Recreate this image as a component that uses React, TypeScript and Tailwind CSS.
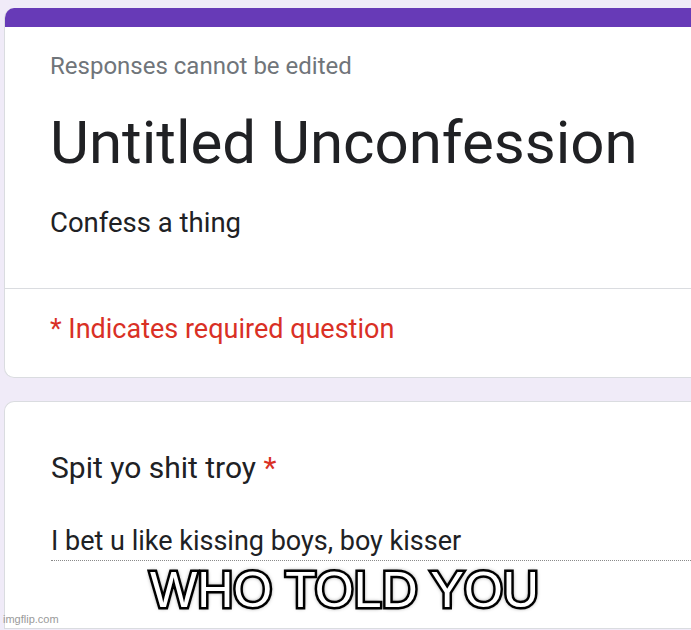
export default function App() {
  return (
    <div className="relative h-[630px] w-[691px] overflow-hidden bg-[#f0ebf8] pl-[4px] pt-[8px] font-['Roboto','Liberation_Sans',sans-serif]">
      {/* Header card */}
      <section className="overflow-hidden rounded-l-[10px] border-b border-l border-[#dadce0] bg-white">
        <div className="h-[19px] bg-[#673ab7]" />
        <div className="pl-[45px] pt-[24px]">
          <p className="text-[24px] leading-[30px] text-[#70757a]">Responses cannot be edited</p>
          <h1 className="mt-[26px] whitespace-nowrap text-[60px] leading-[72px] text-[#202124]">Untitled Unconfession</h1>
          <p className="mt-[27px] text-[27.5px] leading-[34px] text-[#202124]">Confess a thing</p>
        </div>
        <div className="mt-[48px] h-px bg-[#dadce0]" />
        <p className="mt-[23px] pb-[31px] pl-[45px] text-[27px] leading-[34px] text-[#d93025]">
          * Indicates required question
        </p>
      </section>

      {/* Question card */}
      <section className="mt-[23px] h-[228px] rounded-tl-[10px] border-b border-l border-t border-[#dadce0] bg-white pl-[46px] pt-[47px]">
        <p className="text-[30px] leading-[38px] text-[#202124]">
          Spit yo shit troy <span className="text-[#d93025]">*</span>
        </p>
        <div className="mt-[37px] border-b border-dotted border-[#8a8a8a] pb-[2px]">
          <p className="text-[27px] leading-[34px] text-[#202124]">
            I bet u like kissing boys, boy kisser
          </p>
        </div>
      </section>

      {/* Meme caption overlay */}
      <div className="absolute left-[150px] top-[565px] whitespace-nowrap font-['Liberation_Sans',Arial,sans-serif] text-[50px] leading-[50px] text-white [-webkit-text-stroke:5px_#000] [paint-order:stroke_fill] [text-shadow:0_0_5px_#000,0_0_3px_#000]">
        WHO TOLD YOU
      </div>
      <div className="absolute left-[3px] top-[612px] font-['Liberation_Sans',Arial,sans-serif] text-[11px] leading-[14px] text-[#9a9a9a]">
        imgflip.com
      </div>
    </div>
  );
}
